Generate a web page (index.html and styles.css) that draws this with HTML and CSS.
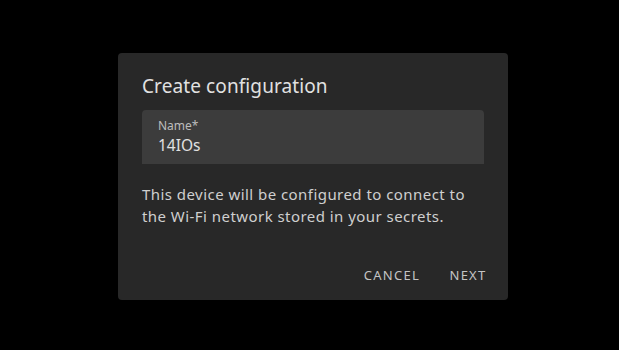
FILE: index.html
```html
<!DOCTYPE html>
<html lang="en">
<head>
  <meta charset="UTF-8" />
  <meta name="viewport" content="width=device-width, initial-scale=1.0"/>
  <title>Create configuration</title>
  <link rel="stylesheet" href="styles.css">
</head>
<body>
  <div class="overlay">
    <div class="dialog">
      <h2 class="dialog-title">Create configuration</h2>
      <div class="text-field">
        <label class="field-label">Name*</label>
        <div class="field-value">14IOs</div>
      </div>
      <p class="dialog-text">This device will be configured to connect to the Wi-Fi network stored in your secrets.</p>
      <div class="dialog-actions">
        <button class="btn">Cancel</button>
        <button class="btn">Next</button>
      </div>
    </div>
  </div>
</body>
</html>
```

FILE: styles.css
```css
body {
  margin: 0;
  background-color: #000;
  font-family: "Noto Sans", sans-serif;
  color: #e1e1e1;
}

.overlay {
  height: 350px;
  display: flex;
  align-items: flex-start;
  justify-content: flex-start;
  padding-left: 118px;
  padding-top: 53px;
  box-sizing: border-box;
}

.dialog {
  width: 390px;
  height: 247px;
  box-sizing: border-box;
  background-color: #282828;
  border-radius: 4px;
  padding: 19px 24px 0 24px;
  display: flex;
  flex-direction: column;
}

.dialog-title {
  margin: 0;
  font-size: 19px;
  font-weight: 400;
  letter-spacing: 0.1px;
  line-height: 28px;
  color: #e1e1e1;
}

.text-field {
  margin-top: 10px;
  height: 54px;
  background-color: #3c3c3c;
  border-radius: 4px 4px 0 0;
  padding: 8px 16px 0 16px;
  box-sizing: border-box;
}

.field-label {
  display: block;
  font-size: 12px;
  line-height: 16px;
  color: #bdbdbd;
}

.field-value {
  font-size: 15.5px;
  line-height: 22px;
  color: #e1e1e1;
}

.dialog-text {
  margin: 19px 0 0 0;
  font-size: 15px;
  letter-spacing: 0.45px;
  line-height: 22px;
  color: #cfcfcf;
}

.dialog-actions {
  margin-top: auto;
  display: flex;
  justify-content: flex-end;
  gap: 8px;
  padding: 0 0 7px 0;
  margin-right: -16px;
}

.btn {
  background: none;
  border: none;
  font-family: "Noto Sans", sans-serif;
  font-size: 13px;
  letter-spacing: 1.25px;
  text-transform: uppercase;
  color: #c4c4c4;
  padding: 0 8px;
  height: 36px;
  min-width: 64px;
}
```
